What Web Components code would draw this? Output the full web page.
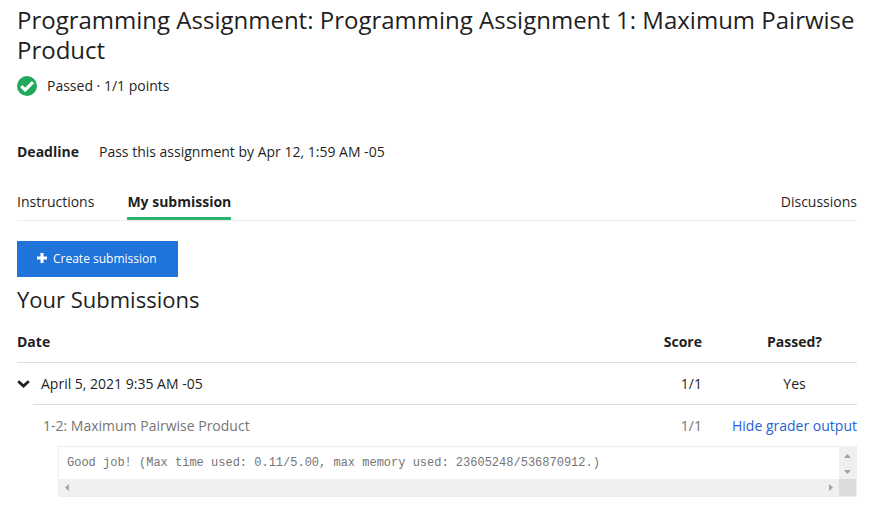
<!DOCTYPE html>
<html lang="en">
<head>
<meta charset="utf-8">
<title>Maximum Pairwise Product</title>
<style>
body { margin: 0; background: #fff; color: #1f1f1f; font: 14px/20px "Open Sans", sans-serif; }
</style>
</head>
<body>
<assignment-page></assignment-page>
<script>
const define = (name, html) => customElements.define(name, class extends HTMLElement {
  constructor() {
    super();
    const t = document.createElement('template');
    t.innerHTML = html;
    this.attachShadow({ mode: 'open' }).append(t.content.cloneNode(true));
  }
});

define('assignment-header', `
<style>
:host { display: block; }
h1 { margin: 0; font-size: 24px; line-height: 30px; font-weight: 400; }
.status { display: flex; align-items: center; gap: 10px; margin-top: 10px; line-height: 22px; }
.deadline { display: flex; gap: 20px; margin-top: 45px; }
svg { display: block; }
</style>
<h1><slot name="title"></slot></h1>
<div class="status">
  <svg width="20" height="20" viewBox="0 0 20 20" aria-hidden="true"><circle cx="10" cy="10" r="10" fill="#21a95b"/><path d="M4.3 10.1 8.2 14 16 6.2" fill="none" stroke="#fff" stroke-width="3.2"/></svg>
  <span><slot name="status"></slot></span>
</div>
<div class="deadline"><strong>Deadline</strong><span><slot name="deadline"></slot></span></div>`);

define('assignment-tabs', `
<style>
:host { display: block; margin-top: 30px; }
nav { display: flex; gap: 33px; border-bottom: 1px solid #eee; }
a { color: inherit; text-decoration: none; padding-bottom: 5px; border-bottom: 3px solid transparent; }
a.active { font-weight: 700; border-color: #2ab573; }
a:last-child { margin-left: auto; }
</style>
<nav>
  <a href="#instructions">Instructions</a>
  <a href="#submission" class="active" aria-current="page">My submission</a>
  <a href="#discussions">Discussions</a>
</nav>`);

define('create-button', `
<style>
:host { display: block; margin-top: 20px; }
button { display: flex; align-items: center; gap: 6px; height: 36px; padding: 0 21px 0 20px; border: 0; background: #2073d8; color: #fff; font: 400 12px/18px "Open Sans", sans-serif; cursor: pointer; }
svg { display: block; margin-bottom: 2px; }
</style>
<button type="button">
  <svg width="10" height="10" viewBox="0 0 10 10" aria-hidden="true"><path d="M5 0V10M0 5H10" stroke="#fff" stroke-width="3"/></svg>
  <span><slot></slot></span>
</button>`);

define('grader-output', `
<style>
:host { display: grid; grid-template-columns: 1fr 17px; grid-template-rows: 32px 17px; border: 1px solid #eee; background: #fff; }
pre { margin: 0; padding: 7px 8px; overflow: hidden; color: #757575; font: 12px/18px "Liberation Mono", "Courier New", monospace; }
.bar { display: flex; align-items: center; justify-content: space-between; background: #f0f0f0; }
.v { flex-direction: column; padding: 7px 0 5px; }
.h { padding: 0 6px; }
.corner { background: #dcdcdc; }
svg { display: block; fill: #a3a3a3; }
</style>
<pre><slot></slot></pre>
<div class="bar v">
  <svg width="7" height="4" viewBox="0 0 7 4"><path d="M0 4 3.5 0 7 4z"/></svg>
  <svg width="7" height="4" viewBox="0 0 7 4"><path d="M0 0 3.5 4 7 0z"/></svg>
</div>
<div class="bar h">
  <svg width="4" height="7" viewBox="0 0 4 7"><path d="M4 0 0 3.5 4 7z"/></svg>
  <svg width="4" height="7" viewBox="0 0 4 7"><path d="M0 0 4 3.5 0 7z"/></svg>
</div>
<div class="corner"></div>`);

define('submission-table', `
<style>
:host { display: block; margin-top: 8px; }
h2 { margin: 0; font-size: 22px; line-height: 28px; font-weight: 400; }
table { width: 100%; margin-top: 8px; border-collapse: separate; border-spacing: 0; table-layout: fixed; }
.c-toggle { width: 16px; } .c-score { width: 80px; } .c-passed { width: 155px; }
th, td { box-sizing: border-box; padding: 0; height: 42px; font-weight: 400; text-align: left; vertical-align: middle; }
thead th { font-weight: 700; }
thead th, .entry > :not(.toggle) { border-bottom: 1px solid #ddd; }
tr > .score { text-align: right; }
tr > .passed { padding-left: 30px; text-align: center; white-space: nowrap; }
.entry th { padding-left: 8px; }
.part { color: #757575; }
.part th { padding-left: 10px; }
.part > * { height: 41px; }
.output td { height: auto; padding-left: 25px; }
button { display: block; padding: 0; border: 0; background: none; cursor: pointer; }
svg { display: block; }
a { color: #1f63d6; text-decoration: none; }
</style>
<h2>Your Submissions</h2>
<table>
  <colgroup><col class="c-toggle"><col><col class="c-score"><col class="c-passed"></colgroup>
  <thead><tr><th colspan="2" scope="col">Date</th><th class="score" scope="col">Score</th><th class="passed" scope="col">Passed?</th></tr></thead>
  <tbody>
    <tr class="entry">
      <td class="toggle"><button type="button" aria-label="Collapse submission" aria-expanded="true"><svg width="13" height="8" viewBox="0 0 13 8"><path d="M1.2 1.2 6.5 6 11.8 1.2" fill="none" stroke="#1f1f1f" stroke-width="2.8"/></svg></button></td>
      <th scope="row">April 5, 2021 9:35 AM -05</th><td class="score">1/1</td><td class="passed">Yes</td>
    </tr>
    <tr class="part"><td></td><th scope="row">1-2: Maximum Pairwise Product</th><td class="score">1/1</td><td class="passed"><a href="#output">Hide grader output</a></td></tr>
    <tr class="output"><td></td><td colspan="3"><grader-output id="output">Good job! (Max time used: 0.11/5.00, max memory used: 23605248/536870912.)</grader-output></td></tr>
  </tbody>
</table>`);

define('assignment-page', `
<style>:host { display: block; padding: 5px 20px 12px 17px; }</style>
<assignment-header>
  <span slot="title">Programming Assignment: Programming Assignment 1: Maximum Pairwise Product</span>
  <span slot="status">Passed · 1/1 points</span>
  <span slot="deadline">Pass this assignment by Apr 12, 1:59 AM -05</span>
</assignment-header>
<main>
  <assignment-tabs></assignment-tabs>
  <create-button>Create submission</create-button>
  <submission-table></submission-table>
</main>`);
</script>
</body>
</html>
